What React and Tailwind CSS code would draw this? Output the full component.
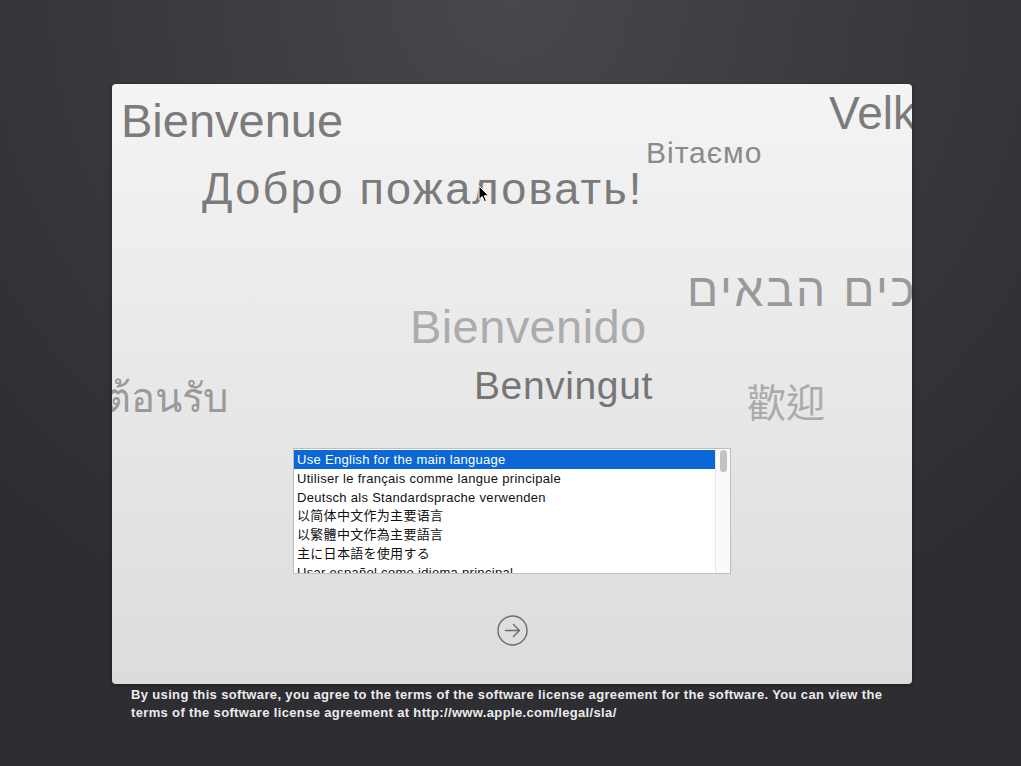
import React, { useState } from 'react';

const languages = [
  'Use English for the main language',
  'Utiliser le français comme langue principale',
  'Deutsch als Standardsprache verwenden',
  '以简体中文作为主要语言',
  '以繁體中文作為主要語言',
  '主に日本語を使用する',
  'Usar español como idioma principal',
  'Usa l’italiano come lingua principale',
  'Gebruik Nederlands als hoofdtaal',
];

const sans = 'font-["Liberation_Sans","Noto_Sans","Noto_Sans_CJK_SC",sans-serif]';

// floating greetings behind the language picker
const Greetings = () => (
  <div className={`absolute inset-0 overflow-hidden pointer-events-none leading-none whitespace-nowrap ${sans}`}>
    <span className="absolute left-[9px] top-[13px] text-[47px] text-[#7b7b7b]">Bienvenue</span>
    <span className="absolute left-[717px] top-[6px] text-[46px] text-[#7b7b7b]">Velkommen</span>
    <span className="absolute left-[534px] top-[54px] text-[30px] tracking-[1px] text-[#8a8a8a]">Вітаємо</span>
    <span className="absolute left-[90px] top-[82px] text-[45px] tracking-[2.2px] text-[#7b7b7b]">Добро пожаловать!</span>
    <span dir="rtl" className="absolute left-[575px] top-[183px] text-[46px] tracking-[2.6px] text-[#999]">ברוכים הבאים</span>
    <span className="absolute left-[298px] top-[219px] text-[47px] tracking-[0.4px] text-[#acacac]">Bienvenido</span>
    <span className="absolute right-[684px] top-[294px] text-[40px] text-[#9a9a9a]">ยินดีต้อนรับ</span>
    <span className="absolute left-[362px] top-[282px] text-[39px] tracking-[0.6px] text-[#767676]">Benvingut</span>
    <span className='absolute left-[635px] top-[297px] text-[39px] text-[#ababab] font-["Noto_Sans_CJK_TC",sans-serif]'>歡迎</span>
  </div>
);

const Pointer = () => (
  <svg className="absolute left-[366px] top-[101px]" width="12" height="18" viewBox="0 0 12 18">
    <path d="M1 1 L1 14.5 L4.2 11.5 L6.4 16.6 L8.4 15.7 L6.3 10.8 L10.6 10.8 Z" fill="#000" stroke="#fff" strokeWidth="1" strokeLinejoin="round" />
  </svg>
);

const LanguageList = ({ selected, onSelect }) => (
  <div className="mx-auto w-[438px] h-[126px] bg-white border border-[#bdbdbd] flex overflow-hidden">
    <div className="flex-1 pt-[1px] overflow-hidden">
      {languages.map((lang, i) => (
        <div
          key={i}
          onClick={() => onSelect(i)}
          className={`h-[18.8px] pl-[3px] text-[13px] tracking-[0.3px] leading-[19px] whitespace-nowrap font-["Liberation_Sans","Noto_Sans_CJK_SC","Noto_Sans_CJK_JP",sans-serif] ${
            selected === i ? 'bg-[#0a67d5] text-white' : 'text-[#111]'
          }`}
        >
          {lang}
        </div>
      ))}
    </div>
    <div className="w-[15px] bg-[#fafafa] border-l border-[#e6e6e6] flex justify-center pt-[1px]">
      <div className="w-[7px] h-[22px] rounded-full bg-[#c2c2c2]" />
    </div>
  </div>
);

const App = () => {
  const [selected, setSelected] = useState(0);

  return (
    <div className="w-[1021px] h-[766px] overflow-hidden bg-[radial-gradient(ellipse_70%_90%_at_50%_0%,#47474c_0%,#38383d_55%,#2d2d32_100%)]">
      <div className="pt-[84px] pl-[112px]">
        <div className="relative w-[800px] h-[600px] rounded-[4px] bg-linear-to-b from-[#f4f4f4] to-[#dcdcdc] shadow-[0_1px_4px_rgba(0,0,0,0.4)] flex flex-col pt-[364px]">
          <Greetings />
          <div className="relative">
            <LanguageList selected={selected} onSelect={setSelected} />
          </div>
          <button className="relative mx-auto mt-[41px] w-[31px] h-[31px]">
            <svg width="31" height="31" viewBox="0 0 31 31" fill="none" stroke="#6b6b6b" strokeWidth="1.4" strokeLinecap="round" strokeLinejoin="round">
              <circle cx="15.5" cy="15.5" r="14.5" />
              <path d="M8.5 15.5 H22.5 M16.5 9.5 L22.5 15.5 L16.5 21.5" />
            </svg>
          </button>
          <Pointer />
        </div>
      </div>
      <p className={`mt-[2px] ml-[131px] w-[770px] text-[13px] leading-[18px] tracking-[0.35px] font-bold text-[#ececec] ${sans}`}>
        By using this software, you agree to the terms of the software license agreement for the software. You can view the terms of the software license agreement at http://www.apple.com/legal/sla/
      </p>
    </div>
  );
};

export default App;
